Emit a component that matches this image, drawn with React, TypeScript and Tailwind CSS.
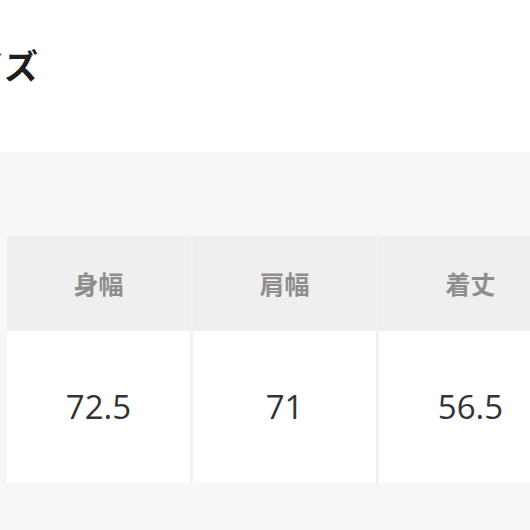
export default function App() {
  const heads = ["身幅", "肩幅", "着丈"];
  const vals = ["72.5", "71", "56.5"];
  return (
    <div className="w-[530px] h-[530px] overflow-hidden bg-white" style={{ fontFamily: '"Noto Sans CJK JP", "Open Sans", sans-serif' }}>
      <div className="h-[152px] pt-[40px]">
        <div className="ml-[-63px] text-[34px] font-bold text-[#1e1e1e] leading-[50px] whitespace-nowrap">サイズ</div>
      </div>
      <div className="h-[378px] bg-[#f7f7f7] pt-[84px] pl-[7px]">
        <div className="grid grid-cols-[183px_183px_183px] w-[555px] gap-x-[3px] bg-[#f1f1f1]">
          {heads.map((h) => (
            <div key={h} className="h-[95px] bg-[#efefef] flex items-center justify-center text-[25px] font-bold text-[#8e8e8e]">
              {h}
            </div>
          ))}
          {vals.map((v) => (
            <div key={v} className="h-[152px] bg-white flex items-center justify-center text-[33px] text-[#333]" style={{ fontFamily: '"Open Sans", sans-serif' }}>
              {v}
            </div>
          ))}
        </div>
      </div>
    </div>
  );
}
